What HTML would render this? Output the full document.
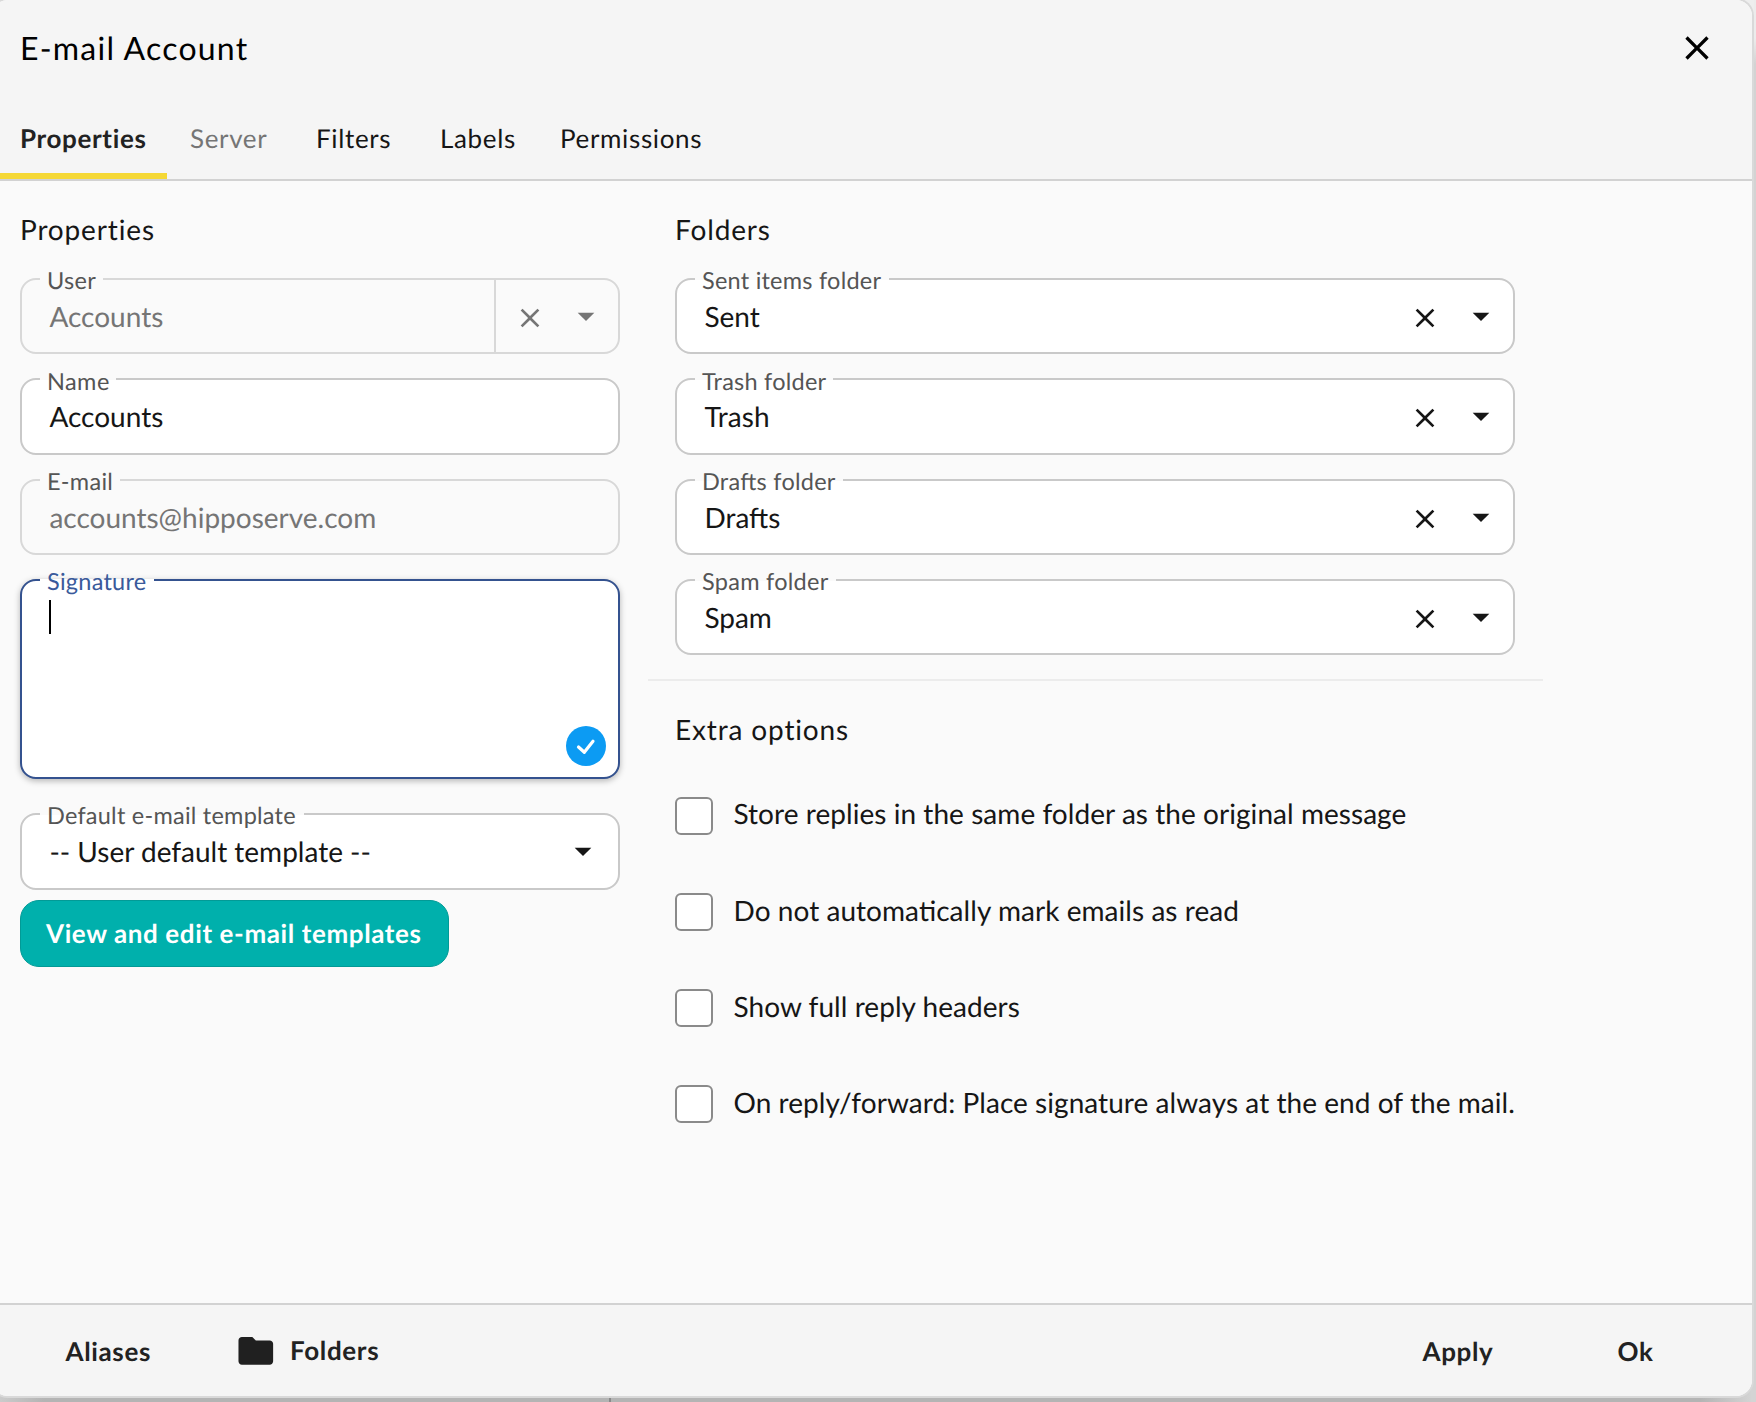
<!DOCTYPE html>
<html lang="en">
<head>
<meta charset="utf-8">
<title>E-mail Account</title>
<style>
html,body{margin:0;padding:0;}
body{width:1756px;height:1402px;overflow:hidden;background:#b3b3b3;font-family:Lato, 'Liberation Sans', sans-serif;color:#111;position:relative;}
.abs,.box,.mask,.ico,.cb{position:absolute;}
#dlg{position:absolute;left:-8px;top:0;width:1760px;height:1396px;background:#fafafa;border-radius:16px;overflow:hidden;box-shadow:0 0 0 2px #d9d9d9;}
#wrap{left:8px;top:0;width:1752px;height:1396px;}
#hdr{left:-8px;top:0;width:1760px;height:179px;background:#f5f5f5;}
#hline{left:-8px;top:179px;width:1760px;height:2px;background:#d2d2d2;}
#ybar{left:-8px;top:173px;width:175px;height:6px;background:#f5d835;}
#ftr{left:-8px;top:1303px;width:1760px;height:91px;background:#f5f5f5;border-top:2px solid #d2d2d2;}
.box{box-sizing:border-box;border:2px solid #c9c9c9;border-radius:16px;background:#fff;}
.box.dis{background:transparent;border-color:#d8d8d8;}
.box.foc{border-color:#34528f;box-shadow:0 2px 6px rgba(0,0,0,.28);}
.mask{height:2px;background:#fafafa;}
.cb{box-sizing:border-box;width:38px;height:38px;border:2px solid #8a8a8a;border-radius:6px;background:#fff;}
#txt text{font-family:Lato, 'Liberation Sans', sans-serif;white-space:pre;text-rendering:geometricPrecision;}
#txt .nl{font-variant-ligatures:none;}
</style>
</head>
<body>
<div class="abs" style="left:1750px;top:0;width:6px;height:1398px;background:#d3d3d3"></div>
<div class="abs" style="left:1736px;top:0;width:20px;height:18px;background:#eee"></div>
<div class="abs" style="left:1754px;top:0;width:2px;height:64px;background:linear-gradient(#ececec,#ececec 60%,#d3d3d3)"></div>
<div class="abs" style="left:0;top:0;width:8px;height:4px;background:#e4e4e4"></div>
<div class="abs" style="left:0;top:1390px;width:1756px;height:12px;background:linear-gradient(to right,#cbcbcb 0,#b4b4b4 44px,#b4b4b4 1700px,#d4d4d4 1752px)"></div>
<div class="abs" style="left:609px;top:1398px;width:2px;height:4px;background:#8a8a8a"></div>
<div id="dlg">
<div id="wrap" class="abs">
  <div id="hdr" class="abs"></div>
  <div id="hline" class="abs"></div>
  <div id="ybar" class="abs"></div>
  <div id="ftr" class="abs"></div>
  <svg class="ico" style="left:1676.6px;top:28.3px" width="40" height="40" viewBox="0 0 24 24"><path fill="#000" d="M19 6.41L17.59 5 12 10.59 6.410 5 5 6.41 10.59 12 5 17.59 6.41 19 12 13.41 17.59 19 19 17.590 13.41 12z"/></svg>
  <div class="box dis" style="left:20px;top:278px;width:600px;height:76px"></div>
  <div class="mask" style="left:40px;top:278px;width:63px;background:#fafafa"></div>
  <div class="abs" style="left:494px;top:278px;width:2px;height:76px;background:#d8d8d8"></div>
  <svg class="ico" style="left:514px;top:302px" width="32" height="32" viewBox="0 0 24 24"><path fill="#757575" d="M19 6.41L17.59 5 12 10.59 6.410 5 5 6.41 10.59 12 5 17.59 6.41 19 12 13.41 17.59 19 19 17.590 13.41 12z"/></svg>
  <svg class="ico" style="left:565.5px;top:296px" width="40" height="40" viewBox="0 0 24 24"><path fill="#757575" d="M7 10l5 5 5-5z"/></svg>
  <div class="box" style="left:20px;top:378px;width:600px;height:77px"></div>
  <div class="mask" style="left:40px;top:378px;width:76px;background:#fafafa"></div>
  <div class="box dis" style="left:20px;top:479px;width:600px;height:76px"></div>
  <div class="mask" style="left:40px;top:479px;width:80px;background:#fafafa"></div>
  <div class="box foc" style="left:20px;top:579px;width:600px;height:200px"></div>
  <div class="mask" style="left:40px;top:579px;width:114px;background:#fff"></div>
  <div class="abs" style="left:49px;top:600px;width:2px;height:34px;background:#000"></div>
  <svg class="ico" style="left:566px;top:726px" width="40" height="40" viewBox="0 0 40 40"><circle cx="20" cy="20" r="20" fill="#0c9bf3"/><path fill="none" stroke="#fff" stroke-width="3.200" stroke-linecap="round" stroke-linejoin="round" d="M12.500 21L18.300 26.300 27 15.300"/></svg>
  <div class="box" style="left:20px;top:813px;width:600px;height:77px"></div>
  <div class="mask" style="left:40px;top:813px;width:264px;background:#fafafa"></div>
  <svg class="ico" style="left:563px;top:831px" width="40" height="40" viewBox="0 0 24 24"><path fill="#161616" d="M7 10l5 5 5-5z"/></svg>
  <div class="abs" id="btn" style="left:20px;top:900px;width:429px;height:67px;border-radius:19px;background:#00b0ac;box-sizing:border-box;border:1px solid #029a96"></div>
  <div class="box" style="left:675px;top:278px;width:840px;height:76px"></div>
  <div class="mask" style="left:695px;top:278px;width:194px;background:#fafafa"></div>
  <svg class="ico" style="left:1409px;top:302px" width="32" height="32" viewBox="0 0 24 24"><path fill="#161616" d="M19 6.41L17.59 5 12 10.59 6.410 5 5 6.41 10.59 12 5 17.59 6.41 19 12 13.41 17.59 19 19 17.590 13.41 12z"/></svg>
  <svg class="ico" style="left:1460.5px;top:296px" width="40" height="40" viewBox="0 0 24 24"><path fill="#161616" d="M7 10l5 5 5-5z"/></svg>
  <div class="box" style="left:675px;top:378px;width:840px;height:77px"></div>
  <div class="mask" style="left:695px;top:378px;width:138px;background:#fafafa"></div>
  <svg class="ico" style="left:1409px;top:402px" width="32" height="32" viewBox="0 0 24 24"><path fill="#161616" d="M19 6.41L17.59 5 12 10.59 6.410 5 5 6.41 10.59 12 5 17.59 6.41 19 12 13.41 17.59 19 19 17.590 13.41 12z"/></svg>
  <svg class="ico" style="left:1460.5px;top:396px" width="40" height="40" viewBox="0 0 24 24"><path fill="#161616" d="M7 10l5 5 5-5z"/></svg>
  <div class="box" style="left:675px;top:479px;width:840px;height:76px"></div>
  <div class="mask" style="left:695px;top:479px;width:148px;background:#fafafa"></div>
  <svg class="ico" style="left:1409px;top:503px" width="32" height="32" viewBox="0 0 24 24"><path fill="#161616" d="M19 6.41L17.59 5 12 10.59 6.410 5 5 6.41 10.59 12 5 17.59 6.41 19 12 13.41 17.59 19 19 17.590 13.41 12z"/></svg>
  <svg class="ico" style="left:1460.5px;top:497px" width="40" height="40" viewBox="0 0 24 24"><path fill="#161616" d="M7 10l5 5 5-5z"/></svg>
  <div class="box" style="left:675px;top:579px;width:840px;height:76px"></div>
  <div class="mask" style="left:695px;top:579px;width:141px;background:#fafafa"></div>
  <svg class="ico" style="left:1409px;top:603px" width="32" height="32" viewBox="0 0 24 24"><path fill="#161616" d="M19 6.41L17.59 5 12 10.59 6.410 5 5 6.41 10.59 12 5 17.59 6.41 19 12 13.41 17.59 19 19 17.590 13.41 12z"/></svg>
  <svg class="ico" style="left:1460.5px;top:597px" width="40" height="40" viewBox="0 0 24 24"><path fill="#161616" d="M7 10l5 5 5-5z"/></svg>
  <div class="abs" style="left:648px;top:679px;width:895px;height:2px;background:#ececec"></div>
  <div class="cb" style="left:675px;top:797px"></div>
  <div class="cb" style="left:675px;top:893px"></div>
  <div class="cb" style="left:675px;top:989px"></div>
  <div class="cb" style="left:675px;top:1085px"></div>
  <svg class="ico" style="left:234.7px;top:1330.4px" width="41.6" height="41.6" viewBox="0 0 24 24"><path fill="#202020" d="M10 4H4c-1.100 0-1.990.900-1.990 2L2 18c0 1.100.900 2 2 2h16c1.100 0 2-.900 2-2V8c0-1.100-.900-2-2-2h-8l-2-2z"/></svg>
  <svg id="txt" class="abs" style="left:0;top:0" width="1756" height="1402" viewBox="0 0 1756 1402">
    <text x="20" y="60.4" font-size="32" class="nl" fill="#000" textLength="227.2" lengthAdjust="spacing">E-mail Account</text>
    <text x="20" y="148.4" font-size="26" font-weight="700" class="nl" fill="#222" textLength="125.9" lengthAdjust="spacing">Properties</text>
    <text x="190" y="148.4" font-size="26" class="nl" fill="#757575" textLength="76.7" lengthAdjust="spacing">Server</text>
    <text x="316" y="148.4" font-size="26" class="nl" fill="#161616" textLength="74.6" lengthAdjust="spacing">Filters</text>
    <text x="440" y="148.4" font-size="26" class="nl" fill="#161616" textLength="75.2" lengthAdjust="spacing">Labels</text>
    <text x="560" y="148.4" font-size="26" class="nl" fill="#161616" textLength="141.5" lengthAdjust="spacing">Permissions</text>
    <text x="20" y="240.4" font-size="28" class="nl" fill="#161616" textLength="134.0" lengthAdjust="spacing">Properties</text>
    <text x="47" y="288.8" font-size="23.5" fill="#555" textLength="48.9" lengthAdjust="spacing">User</text>
    <text x="49.4" y="327.2" font-size="28" fill="#757575" textLength="113.9" lengthAdjust="spacing">Accounts</text>
    <text x="47" y="389.8" font-size="23.5" fill="#555" textLength="62.3" lengthAdjust="spacing">Name</text>
    <text x="49.4" y="427.2" font-size="28" fill="#161616" textLength="113.9" lengthAdjust="spacing">Accounts</text>
    <text x="47" y="489.8" font-size="23.5" fill="#555" textLength="65.9" lengthAdjust="spacing">E-mail</text>
    <text x="49.4" y="528.2" font-size="28" fill="#757575" textLength="326.8" lengthAdjust="spacing">accounts@hipposerve.com</text>
    <text x="47" y="589.8" font-size="23.5" fill="#3a5a9b" textLength="99.2" lengthAdjust="spacing">Signature</text>
    <text x="47" y="823.8" font-size="23.5" fill="#555" textLength="248.6" lengthAdjust="spacing">Default e-mail template</text>
    <text x="49.4" y="862.2" font-size="28" fill="#161616" textLength="321.5" lengthAdjust="spacing">-- User default template --</text>
    <text x="46" y="942.7" font-size="26" font-weight="700" class="nl" fill="#fff" textLength="374.9" lengthAdjust="spacing">View and edit e-mail templates</text>
    <text x="675" y="240.4" font-size="28" class="nl" fill="#161616" textLength="94.9" lengthAdjust="spacing">Folders</text>
    <text x="702" y="288.8" font-size="23.5" fill="#555" textLength="179.0" lengthAdjust="spacing">Sent items folder</text>
    <text x="704.4" y="327.2" font-size="28" fill="#161616" textLength="55.4" lengthAdjust="spacing">Sent</text>
    <text x="702" y="389.8" font-size="23.5" fill="#555" textLength="124.1" lengthAdjust="spacing">Trash folder</text>
    <text x="704.4" y="427.2" font-size="28" fill="#161616" textLength="65.1" lengthAdjust="spacing">Trash</text>
    <text x="702" y="489.8" font-size="23.5" fill="#555" textLength="133.4" lengthAdjust="spacing">Drafts folder</text>
    <text x="704.4" y="528.2" font-size="28" fill="#161616" textLength="76.0" lengthAdjust="spacing">Drafts</text>
    <text x="702" y="589.8" font-size="23.5" fill="#555" textLength="126.2" lengthAdjust="spacing">Spam folder</text>
    <text x="704.4" y="628.2" font-size="28" fill="#161616" textLength="67.5" lengthAdjust="spacing">Spam</text>
    <text x="675" y="740.4" font-size="28" class="nl" fill="#161616" textLength="173.2" lengthAdjust="spacing">Extra options</text>
    <text x="733.5" y="824.4" font-size="28" fill="#161616" textLength="672.8" lengthAdjust="spacing">Store replies in the same folder as the original message</text>
    <text x="733.5" y="921.3" font-size="28" fill="#161616" textLength="505.4" lengthAdjust="spacing">Do not automatically mark emails as read</text>
    <text x="733.5" y="1017.3" font-size="28" fill="#161616" textLength="286.4" lengthAdjust="spacing">Show full reply headers</text>
    <text x="733.5" y="1113.3" font-size="28" fill="#161616" textLength="781.3" lengthAdjust="spacing">On reply/forward: Place signature always at the end of the mail.</text>
    <text x="65.5" y="1361.2" font-size="26" font-weight="700" class="nl" fill="#222" textLength="84.9" lengthAdjust="spacing">Aliases</text>
    <text x="290" y="1360.2" font-size="26" font-weight="700" class="nl" fill="#222" textLength="88.6" lengthAdjust="spacing">Folders</text>
    <text x="1422.5" y="1361.2" font-size="26" font-weight="700" class="nl" fill="#222" textLength="70.3" lengthAdjust="spacing">Apply</text>
    <text x="1617.5" y="1361.2" font-size="26" font-weight="700" class="nl" fill="#222" textLength="35.4" lengthAdjust="spacing">Ok</text>
  </svg>
</div>
</div>
</body>
</html>
